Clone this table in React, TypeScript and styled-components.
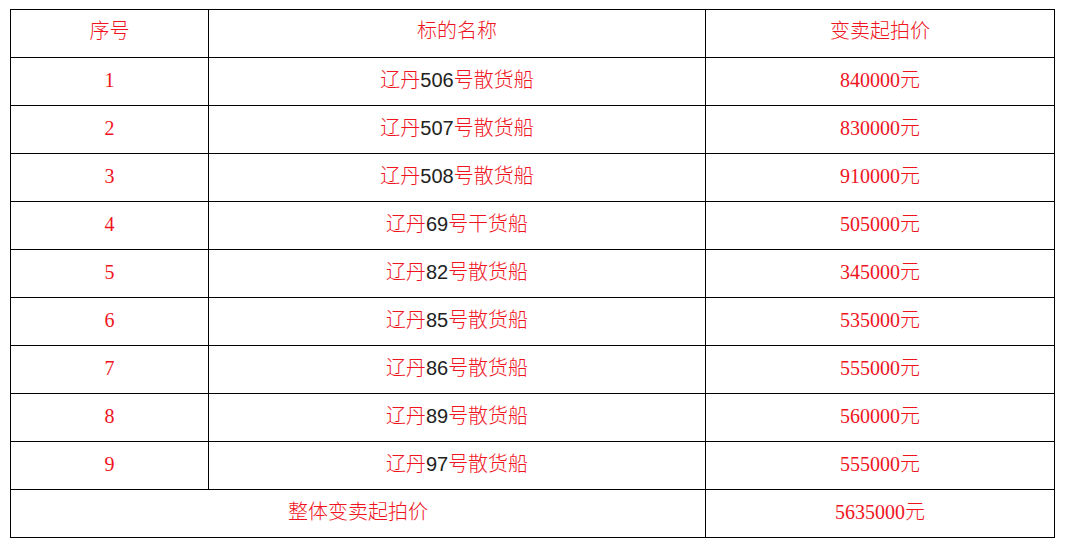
import * as React from 'react';
import styled, { createGlobalStyle } from 'styled-components';

const rows = [
  { no: '1', prefix: '辽丹', num: '506', suffix: '号散货船', price: '840000元' },
  { no: '2', prefix: '辽丹', num: '507', suffix: '号散货船', price: '830000元' },
  { no: '3', prefix: '辽丹', num: '508', suffix: '号散货船', price: '910000元' },
  { no: '4', prefix: '辽丹', num: '69', suffix: '号干货船', price: '505000元' },
  { no: '5', prefix: '辽丹', num: '82', suffix: '号散货船', price: '345000元' },
  { no: '6', prefix: '辽丹', num: '85', suffix: '号散货船', price: '535000元' },
  { no: '7', prefix: '辽丹', num: '86', suffix: '号散货船', price: '555000元' },
  { no: '8', prefix: '辽丹', num: '89', suffix: '号散货船', price: '560000元' },
  { no: '9', prefix: '辽丹', num: '97', suffix: '号散货船', price: '555000元' },
];

const App = () => {
  return (
    <>
      <GlobalStyle />
      <Table>
        <colgroup>
          <col style={{ width: '198px' }} />
          <col style={{ width: '497px' }} />
          <col style={{ width: '349px' }} />
        </colgroup>
        <thead>
          <tr>
            <HeadCell>序号</HeadCell>
            <HeadCell>标的名称</HeadCell>
            <HeadCell>变卖起拍价</HeadCell>
          </tr>
        </thead>
        <tbody>
          {rows.map((r) => (
            <tr key={r.no}>
              <Cell>{r.no}</Cell>
              <Cell>
                {r.prefix}
                <Num>{r.num}</Num>
                {r.suffix}
              </Cell>
              <Cell>{r.price}</Cell>
            </tr>
          ))}
          <tr>
            <Cell colSpan={2}>整体变卖起拍价</Cell>
            <Cell>5635000元</Cell>
          </tr>
        </tbody>
      </Table>
    </>
  );
};

export default App;

const GlobalStyle = createGlobalStyle`
  body {
    margin: 0;
    background: #ffffff;
    font-family: "Liberation Serif", "Noto Sans CJK SC", serif;
  }
`;

const Table = styled.table`
  margin: 9px 0 0 10px;
  width: 1044px;
  border-collapse: collapse;
  table-layout: fixed;
  border: 1px solid #000;
`;

const HeadCell = styled.th`
  height: 41px;
  padding: 0 0 6px 0;
  border: 1px solid #000;
  color: #f0141e;
  font-size: 20px;
  line-height: 24px;
  font-weight: 300;
  text-align: center;
  vertical-align: middle;
`;

const Cell = styled.td`
  height: 43px;
  padding: 0 0 4px 0;
  border: 1px solid #000;
  color: #f0141e;
  font-size: 20px;
  line-height: 24px;
  font-weight: 300;
  text-align: center;
  vertical-align: middle;
`;

const Num = styled.span`
  color: #222222;
  font-family: "Liberation Sans", sans-serif;
  font-weight: 400;
`;
